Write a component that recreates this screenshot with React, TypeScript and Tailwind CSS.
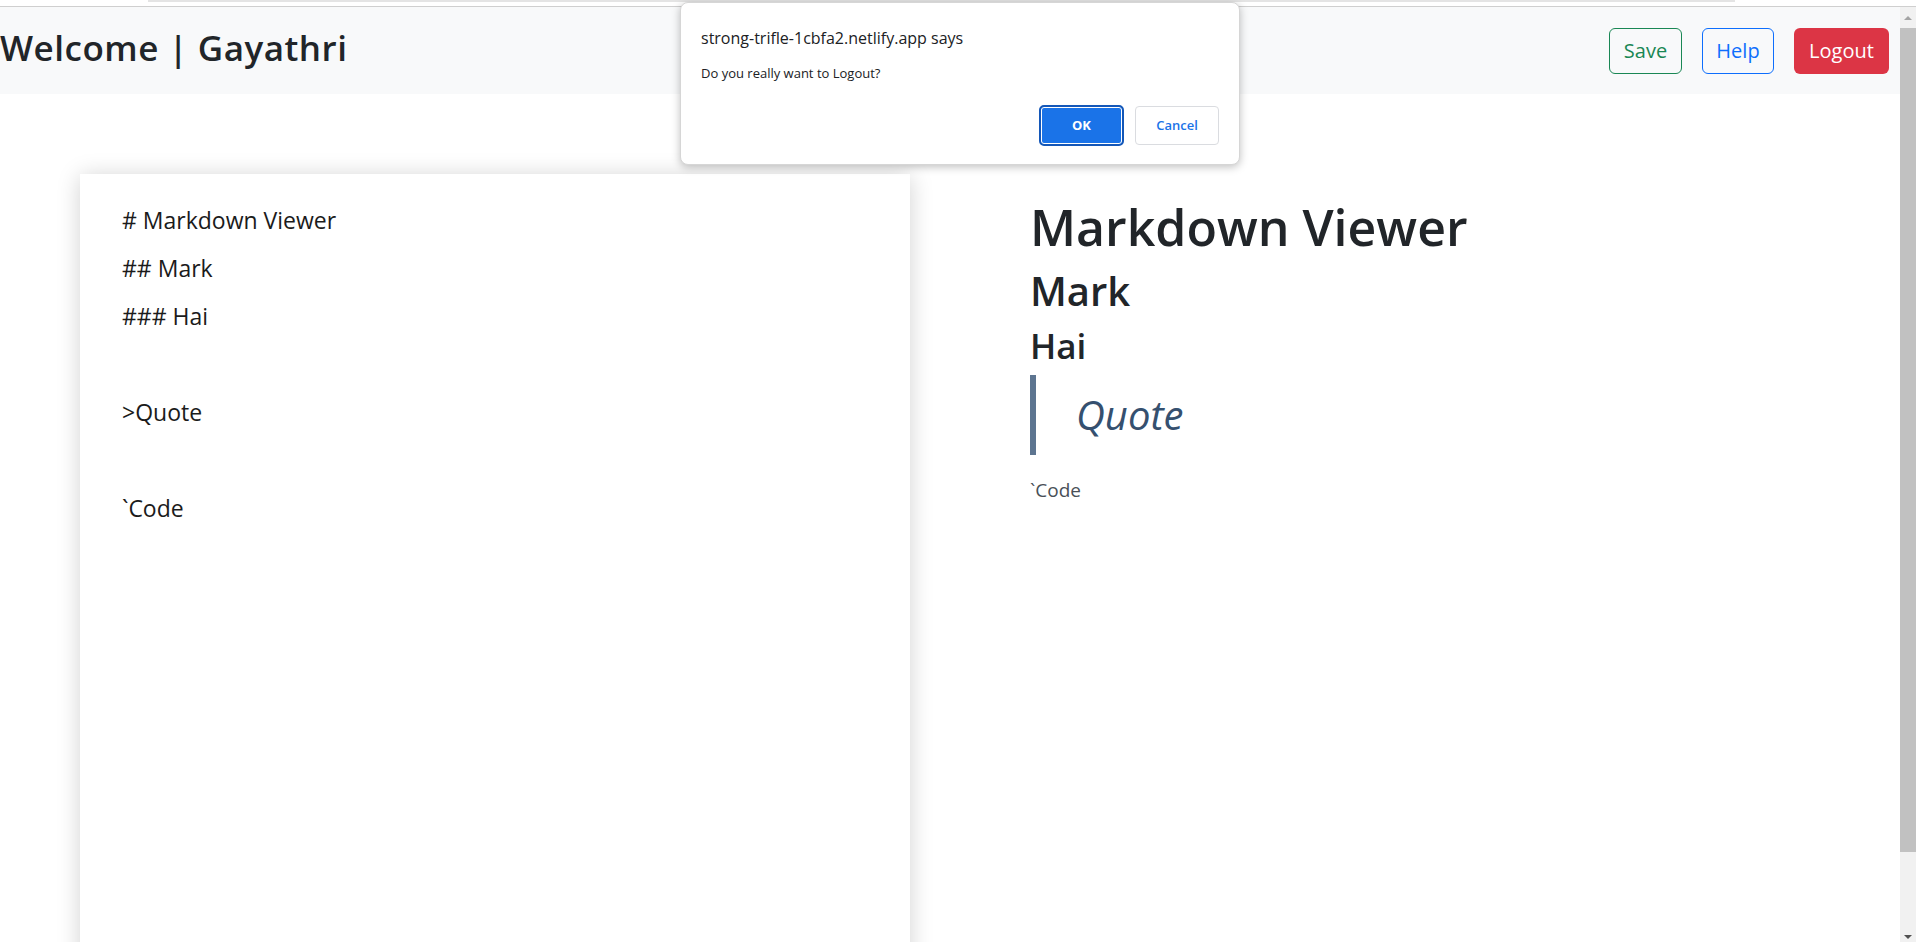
import React from 'react'

const editorLines = ['# Markdown Viewer', '## Mark', '### Hai', '', '>Quote', '', '`Code']

const Header = () => {
  return (
    <div className="h-[87px] shrink-0 bg-[#f8f9fa] flex items-center justify-between pr-[11px]">
      <h3 className="text-[35px] font-semibold leading-none text-[#212529] tracking-[0.5px] pb-[7px]">Welcome | Gayathri</h3>
      <div className="flex items-center gap-[20px] pt-[1px]">
        <button className="w-[73px] h-[46px] rounded-[6px] border border-[#198754] text-[#198754] text-[20px]">Save</button>
        <button className="w-[72px] h-[46px] rounded-[6px] border border-[#0d6efd] text-[#0d6efd] text-[20px]">Help</button>
        <button className="w-[95px] h-[46px] rounded-[6px] bg-[#dc3545] text-white text-[20px]">Logout</button>
      </div>
    </div>
  )
}

const Scrollbar = () => {
  return (
    <div className="w-[16px] h-full bg-[#f1f1f1] flex flex-col items-center">
      <div className="h-[21px] shrink-0 flex items-center justify-center">
        <div className="w-0 h-0 border-l-[4px] border-r-[4px] border-b-[4px] border-l-transparent border-r-transparent border-b-[#a3a3a3]" />
      </div>
      <div className="w-full h-[824px] shrink-0 bg-[#c1c1c1]" />
      <div className="flex-1 flex items-end justify-center pb-[3px]">
        <div className="w-0 h-0 border-l-[4px] border-r-[4px] border-t-[4px] border-l-transparent border-r-transparent border-t-[#505050]" />
      </div>
    </div>
  )
}

const ConfirmDialog = () => {
  return (
    <div className="absolute left-[680px] top-[2px] w-[560px] h-[163px] bg-white rounded-[8px] border border-[#d6d6d6] shadow-[0_2px_8px_rgba(0,0,0,0.25)] px-[20px] pt-[24px]">
      <div className="text-[16px] leading-[22px] text-[#202124]">strong-trifle-1cbfa2.netlify.app says</div>
      <div className="mt-[15px] text-[13px] leading-[18px] text-[#202124]">Do you really want to Logout?</div>
      <div className="mt-[23px] flex justify-end gap-[11px]">
        <button className="w-[85px] h-[41px] rounded-[5px] border-2 border-[#1457b8] bg-[#1a73e8] shadow-[inset_0_0_0_1px_white] text-white text-[13px] font-bold">OK</button>
        <button className="w-[84px] h-[39px] mt-[1px] rounded-[4px] border border-[#dadce0] bg-white text-[#1a73e8] text-[13px] font-semibold">Cancel</button>
      </div>
    </div>
  )
}

export default function App() {
  return (
    <div className="relative w-[1916px] h-[942px] overflow-hidden bg-white font-['Open_Sans',sans-serif]">
      {/* browser chrome leftovers */}
      <div className="h-[7px] border-b border-[#cfcfcf] bg-white flex">
        <div className="ml-[148px] w-[1587px] h-[2px] bg-[#e4e4e4]" />
      </div>
      <div className="flex h-[935px]">
        <div className="flex-1 flex flex-col min-h-0">
          <Header />
          <div className="grid grid-cols-2 shrink-0">
            <div className="pl-[80px] pr-[40px] pt-[80px]">
              <div className="h-[900px] bg-white shadow-[0_2px_22px_rgba(0,0,0,0.18)] pl-[42px] pt-[22px]">
                {editorLines.map((line, i) => (
                  <div key={i} className="h-[48px] text-[23px] leading-[48px] text-[#1b1b1b] whitespace-pre">{line}</div>
                ))}
              </div>
            </div>
            <div className="pl-[80px] pt-[103px]">
              <h1 className="text-[50px] leading-[60px] font-semibold text-[#212529] mb-[10px]">Markdown Viewer</h1>
              <h2 className="text-[40px] leading-[48px] font-semibold text-[#212529] mb-[10px]">Mark</h2>
              <h3 className="text-[35px] leading-[42px] font-semibold text-[#212529] mb-[8px]">Hai</h3>
              <blockquote className="border-l-[6px] border-[#5d7590] pl-[40px] py-[10px] mb-[20px]">
                <p className="text-[40px] leading-[60px] italic text-[#35506f]">Quote</p>
              </blockquote>
              <p className="text-[19px] leading-[30px] text-[#495057]">`Code</p>
            </div>
          </div>
        </div>
        <Scrollbar />
      </div>
      <ConfirmDialog />
    </div>
  )
}
